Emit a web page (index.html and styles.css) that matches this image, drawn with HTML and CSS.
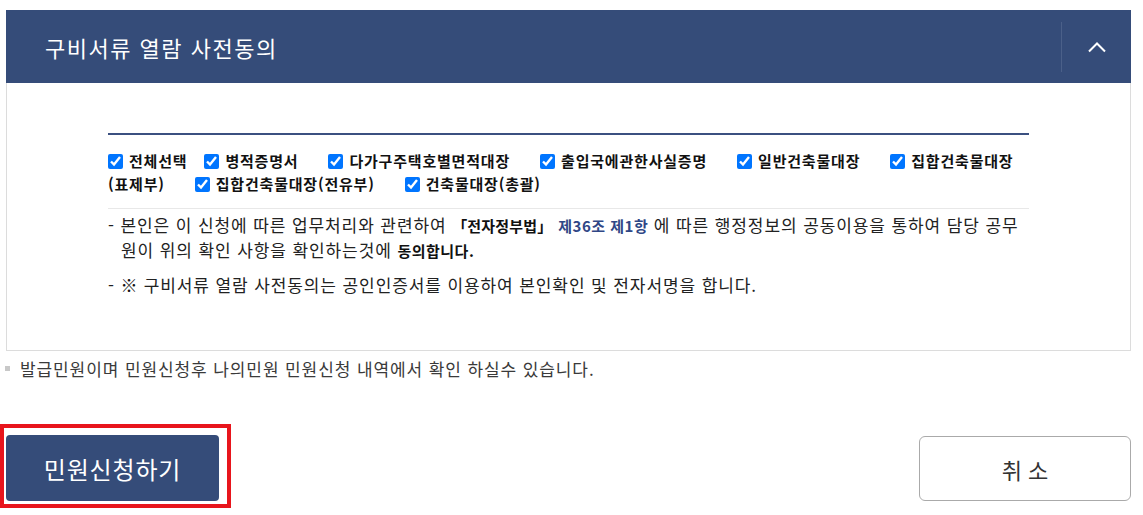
FILE: index.html
```html
<!DOCTYPE html>
<html lang="ko">
<head>
<meta charset="utf-8">
<title>구비서류 열람 사전동의</title>
<link rel="stylesheet" href="styles.css">
</head>
<body>
<div class="wrap">
  <div class="panel-head">
    <h2 class="panel-title">구비서류 열람 사전동의</h2>
    <span class="head-divider"></span>
    <button class="toggle" type="button" aria-label="접기">
      <svg width="20" height="12" viewBox="0 0 20 12"><path d="M2 10.5 L10 2.5 L18 10.5" fill="none" stroke="#fff" stroke-width="2"/></svg>
    </button>
  </div>
  <div class="panel-body">
    <div class="checks">
      <label class="chk first"><input type="checkbox" checked><span>전체선택</span></label><label class="chk"><input type="checkbox" checked><span>병적증명서</span></label><label class="chk"><input type="checkbox" checked><span>다가구주택호별면적대장</span></label><label class="chk"><input type="checkbox" checked><span>출입국에관한사실증명</span></label><label class="chk"><input type="checkbox" checked><span>일반건축물대장</span></label><label class="chk"><input type="checkbox" checked><span>집합건축물대장(표제부)</span></label><label class="chk"><input type="checkbox" checked><span>집합건축물대장(전유부)</span></label><label class="chk"><input type="checkbox" checked><span>건축물대장(총괄)</span></label>
    </div>
    <div class="terms">
      <p>- 본인은 이 신청에 따른 업무처리와 관련하여 <b class="law">「전자정부법」</b> <b class="art">제36조 제1항</b> 에 따른 행정정보의 공동이용을 통하여 담당 공무원이 위의 확인 사항을 확인하는것에 <b class="agree">동의합니다.</b></p>
      <p>- <b class="mark">※</b> 구비서류 열람 사전동의는 공인인증서를 이용하여 본인확인 및 전자서명을 합니다.</p>
    </div>
  </div>
  <p class="note">발급민원이며 민원신청후 나의민원 민원신청 내역에서 확인 하실수 있습니다.</p>
  <div class="actions">
    <div class="highlight"><button class="btn btn-primary" type="button">민원신청하기</button></div>
    <button class="btn btn-cancel" type="button">취 소</button>
  </div>
</div>
</body>
</html>
```
FILE: styles.css
```css
* { box-sizing: border-box; }
body {
  margin: 0;
  background: #fff;
  font-family: "Noto Sans CJK KR", "Noto Sans", sans-serif;
  color: #222;
}
.wrap {
  padding: 10px 12px 0 6px;
}
.panel-head {
  height: 73px;
  background: #354c79;
  display: flex;
  align-items: center;
  padding-left: 39px;
}
.panel-title {
  margin: 0;
  flex: 1;
  font-size: 22px;
  font-weight: normal;
  letter-spacing: 1.5px;
  color: #fff;
  line-height: 30px;
}
.head-divider {
  width: 1px;
  height: 50px;
  background: #4b6089;
}
.toggle {
  width: 69px;
  height: 73px;
  border: 0;
  background: transparent;
  padding: 0;
  display: flex;
  align-items: center;
  justify-content: center;
}
.panel-body {
  border: 1px solid #dcdcdc;
  border-top: 0;
  height: 268px;
  padding: 50px 101px 0 101px;
}
.checks {
  border-top: 2px solid #3b5080;
  border-bottom: 1px solid #e8e8e8;
  padding: 14px 0 13px;
  line-height: 23px;
  font-size: 15px;
  font-weight: bold;
  letter-spacing: 0.8px;
  color: #111;
}
.chk {
  margin-right: 30px;
}
.chk.first { margin-right: 17px; }
.chk input {
  width: 15px;
  height: 15px;
  margin: 0 6px 0 0;
  vertical-align: -2px;
}
.terms {
  padding-top: 4px;
  font-size: 17px;
  letter-spacing: 0.9px;
  line-height: 24px;
  color: #222;
}
.terms p {
  margin: 0 0 10px;
  padding-left: 13px;
  text-indent: -13px;
}
.terms b {
  font-size: 15px;
  letter-spacing: 0.5px;
  color: #111;
}
.terms b.law { letter-spacing: 0.2px; }
.terms b.art {
  color: #2f4786;
  font-size: 15px;
  letter-spacing: 0.5px;
}
.terms b.mark { font-size: 17px; }
.note {
  margin: 8px 0 0 -1px;
  padding-left: 15px;
  position: relative;
  font-size: 17px;
  letter-spacing: 0.9px;
  line-height: 20px;
  color: #3a3a3a;
}
.note::before {
  content: "";
  position: absolute;
  left: 0;
  top: 7px;
  width: 5px;
  height: 5px;
  background: #c8c8c8;
}
.actions {
  margin-top: 45px;
  display: flex;
  justify-content: space-between;
  align-items: flex-start;
}
.highlight {
  margin-left: -6px;
  border: 4px solid #e8151c;
  padding: 7px 8px 3px 2px;
}
.btn {
  font-family: "Noto Sans CJK KR", "Noto Sans", sans-serif;
  font-size: 24px;
  display: block;
  cursor: pointer;
}
.btn-primary {
  width: 213px;
  height: 66px;
  border: 0;
  border-radius: 4px;
  background: #354c79;
  color: #fff;
  letter-spacing: 0.8px;
}
.btn-cancel {
  margin-top: 12px;
  width: 212px;
  height: 65px;
  border: 1px solid #aaa;
  border-radius: 6px;
  background: #fff;
  color: #333;
  font-size: 22px;
}
```
